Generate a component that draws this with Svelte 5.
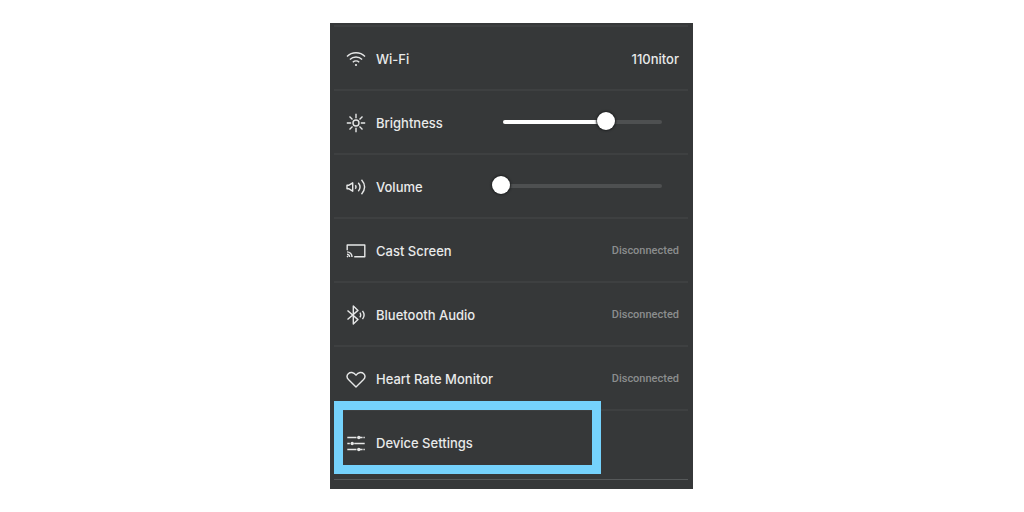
<script lang="ts">
	let levels = $state({ brightness: 65, volume: 0 });

	const rows: { id: string; label: string; level?: 'brightness' | 'volume'; status?: string }[] = [
		{ id: 'wifi', label: 'Wi-Fi' },
		{ id: 'brightness', label: 'Brightness', level: 'brightness' },
		{ id: 'volume', label: 'Volume', level: 'volume' },
		{ id: 'cast', label: 'Cast Screen', status: 'Disconnected' },
		{ id: 'bluetooth', label: 'Bluetooth Audio', status: 'Disconnected' },
		{ id: 'heart', label: 'Heart Rate Monitor', status: 'Disconnected' },
		{ id: 'settings', label: 'Device Settings' }
	];
</script>

{#snippet icon(id: string)}
	<svg class="icon" width="20" height="20" viewBox="0 0 20 20" aria-hidden="true">
		{#if id === 'wifi'}
			<path d="M1 7.4a12.8 12.8 0 0 1 18 0M3.9 10.4a8.8 8.8 0 0 1 12.2 0M6.8 13.3a4.7 4.7 0 0 1 6.4 0" />
			<circle class="solid" cx="10" cy="16" r="1.1" />
		{:else if id === 'brightness'}
			<circle cx="10" cy="10" r="3" />
			<path d="M10 .8v4.4M10 14.8v4.4M.8 10h4.4M14.8 10h4.4M3.5 3.5l3 3M13.5 13.5l3 3M3.5 16.5l3-3M13.5 6.5l3-3" />
		{:else if id === 'volume'}
			<path d="M1 8.2h2l3.7-2.4v8.4L3 11.8H1z" />
			<path d="M9.3 8.3q1.4 1.7 0 3.4M12.3 5.7q3.5 4.3 0 8.6M15.5 2.8q6.2 7.2 0 14.4" />
		{:else if id === 'cast'}
			<path d="M1.2 9.2V4h17.6v11.8H8.2" />
			<path d="M1 10.9a5 5 0 0 1 5 5M1 13.3a2.6 2.6 0 0 1 2.6 2.6" />
			<circle class="solid" cx="1.5" cy="15.6" r="0.8" />
		{:else if id === 'bluetooth'}
			<path d="M1.5 5.5L12 14.6 7.3 19V1L12 5.4 1.5 14.5" />
			<path d="M13.9 7.6q1.6 2.4 0 4.8M16.5 5.8q3.2 4.2 0 8.4" />
		{:else if id === 'heart'}
			<path d="M10 18L2.7 10.8C.8 8.8.7 6.3 2.3 4.7 4.2 2.8 7.6 3 10 6.2 12.4 3 15.8 2.8 17.7 4.7c1.6 1.6 1.5 4.1-.4 6.1z" />
		{:else}
			<path d="M1.3 4.5h9.2M14 4.5h2.6M17.4 4.5h1.4M1.3 10.5h2.5M8.2 10.5h10.5M1.3 16.5h9.2M14 16.5h2.6M17.4 16.5h1.4" />
			<circle class="solid" cx="12.8" cy="4.5" r="1.7" />
			<circle class="solid" cx="6.2" cy="10.5" r="1.7" />
			<circle class="solid" cx="12.8" cy="16.5" r="1.7" />
		{/if}
	</svg>
{/snippet}

<main>
	<div class="panel">
		<ul>
			{#each rows as row (row.id)}
				<li class:highlighted={row.id === 'settings'}>
					{#if row.level}
						<div class="row">
							{@render icon(row.id)}
							<label for={row.id}>{row.label}</label>
							<div class="slider">
								<div class="track">
									<div class="fill" style:width="{levels[row.level]}%"></div>
								</div>
								<input id={row.id} type="range" min="0" max="100" bind:value={levels[row.level]} />
							</div>
						</div>
					{:else}
						<button class="row" type="button">
							{@render icon(row.id)}
							<span>{row.label}</span>
							{#if row.id === 'wifi'}
								<span class="network">110nitor</span>
							{:else if row.status}
								<span class="status">{row.status}</span>
							{/if}
						</button>
					{/if}
				</li>
			{/each}
		</ul>
	</div>
</main>

<style>
	:global(body) {
		background: #fff;
	}

	main {
		display: flex;
		justify-content: center;
		padding: 23px 17px 23px 16px;
		font-family: Inter, 'Liberation Sans', sans-serif;
		font-size: 13px;
		font-weight: 500;
		line-height: 20px;
		color: #e9eaea;
	}

	.panel {
		box-sizing: border-box;
		width: 100%;
		max-width: 363px;
		padding: 2px 5px 9px 4px;
		background: #363839;
	}

	ul {
		list-style: none;
		margin: 0;
		padding: 0 0 6px;
		border-bottom: 1px solid #56595a;
	}

	li {
		position: relative;
		border-top: 2px solid #3e4041;
	}

	/* callout frame around the row */
	.highlighted::after {
		content: '';
		position: absolute;
		inset: -10px auto -1px 0;
		box-sizing: border-box;
		width: 75.5%;
		border: 9px solid #75d2fc;
		pointer-events: none;
	}

	.row {
		box-sizing: border-box;
		display: flex;
		align-items: center;
		gap: 10px;
		width: 100%;
		min-height: 62px;
		margin: 0;
		padding: 2px 9px 0 12px;
		border: 0;
		background: none;
		color: inherit;
		font: inherit;
		text-align: left;
	}

	button {
		cursor: pointer;
	}

	.icon {
		flex: none;
		fill: none;
		stroke: #e6e7e7;
		stroke-width: 1.4;
		stroke-linejoin: round;
	}

	.solid {
		fill: #e6e7e7;
		stroke: none;
	}

	.network,
	.status {
		margin-left: auto;
	}

	.status {
		font-family: Roboto, sans-serif;
		font-size: 11px;
		color: #8b8d8e;
	}

	.slider {
		position: relative;
		width: 179px;
		height: 18px;
		margin: 0 8px 4px auto;
	}

	.track {
		position: absolute;
		inset: 8px 9px auto 11px;
		height: 4px;
		border-radius: 2px;
		background: #4e5051;
	}

	.fill {
		height: 100%;
		border-radius: 2px;
		background: #fff;
	}

	input {
		position: absolute;
		inset: 0;
		width: 100%;
		height: 100%;
		margin: 0;
		appearance: none;
		background: none;
	}

	input::-webkit-slider-thumb {
		appearance: none;
		width: 18px;
		height: 18px;
		border: 0;
		border-radius: 50%;
		background: #fff;
		box-shadow: 0 0 2px 1px #1f2122;
	}
</style>
